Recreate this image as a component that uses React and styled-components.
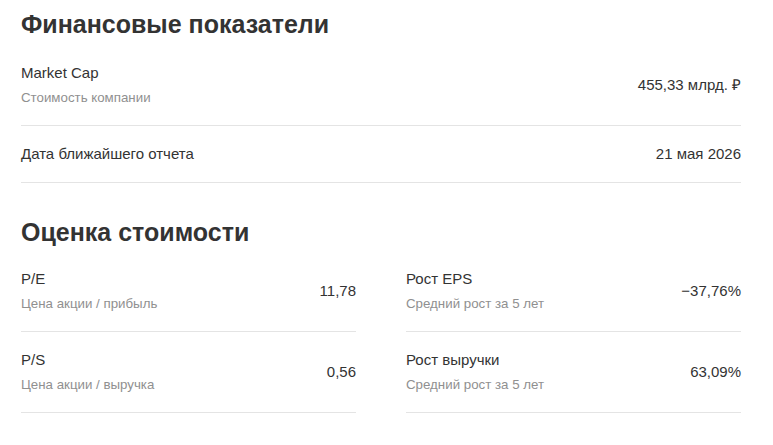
import React from 'react';
import styled, { createGlobalStyle } from 'styled-components';

const GlobalStyle = createGlobalStyle`
  body {
    margin: 0;
    background: #ffffff;
    font-family: "Liberation Sans", Arial, sans-serif;
    color: #333333;
  }
`;

const Page = styled.div`
  box-sizing: border-box;
  width: 773px;
  padding: 8px 32px 0 21px;
`;

const Title = styled.h2`
  margin: ${(props) => (props.second ? '33px 0 3px' : '0 0 5px')};
  font-size: 25px;
  line-height: 32px;
  font-weight: 700;
  color: #333333;
`;

const List = styled.div`
  display: flex;
  flex-direction: column;
`;

const Grid = styled.div`
  display: grid;
  grid-template-columns: 1fr 1fr;
  column-gap: 50px;
`;

const Row = styled.div`
  display: flex;
  align-items: center;
  justify-content: space-between;
  padding: 18px 0;
  border-bottom: 1px solid #e4e4e4;
`;

const Texts = styled.div`
  display: flex;
  flex-direction: column;
  gap: 6px;
`;

const Label = styled.div`
  font-size: 15px;
  line-height: 20px;
  color: #333333;
`;

const Sub = styled.div`
  font-size: 13.3px;
  line-height: 18px;
  color: #909090;
`;

const Value = styled.div`
  font-size: 15px;
  line-height: 20px;
  color: #333333;
  white-space: nowrap;
`;

function Metric({ label, sub, value }) {
  return (
    <Row>
      <Texts>
        <Label>{label}</Label>
        {sub && <Sub>{sub}</Sub>}
      </Texts>
      <Value>{value}</Value>
    </Row>
  );
}

const valuation = [
  { label: 'P/E', sub: 'Цена акции / прибыль', value: '11,78' },
  { label: 'Рост EPS', sub: 'Средний рост за 5 лет', value: '−37,76%' },
  { label: 'P/S', sub: 'Цена акции / выручка', value: '0,56' },
  { label: 'Рост выручки', sub: 'Средний рост за 5 лет', value: '63,09%' },
];

export default function App() {
  return (
    <>
      <GlobalStyle />
      <Page>
        <Title>Финансовые показатели</Title>
        <List>
          <Metric label="Market Cap" sub="Стоимость компании" value="455,33 млрд. ₽" />
          <Metric label="Дата ближайшего отчета" value="21 мая 2026" />
        </List>

        <Title second>Оценка стоимости</Title>
        <Grid>
          {valuation.map((item) => (
            <Metric key={item.label} {...item} />
          ))}
        </Grid>
      </Page>
    </>
  );
}
